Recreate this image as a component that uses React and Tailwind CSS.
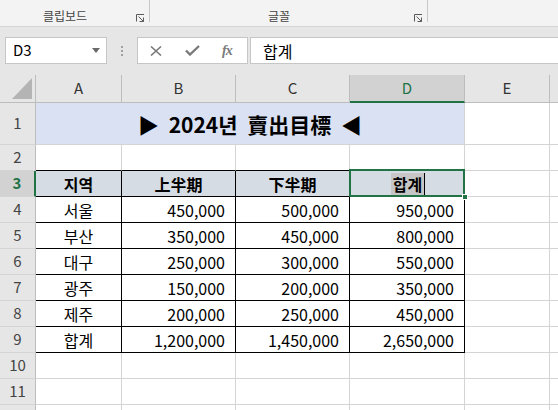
import React from 'react'

const rows = [
  ['4', '서울', '450,000', '500,000', '950,000'],
  ['5', '부산', '350,000', '450,000', '800,000'],
  ['6', '대구', '250,000', '300,000', '550,000'],
  ['7', '광주', '150,000', '200,000', '350,000'],
  ['8', '제주', '200,000', '250,000', '450,000'],
  ['9', '합계', '1,200,000', '1,450,000', '2,650,000'],
]

function Launcher() {
  return (
    <svg width="9" height="8" viewBox="0 0 9 8" className="text-[#5a5a5a]">
      <path d="M0.5 7.5V0.5H8" fill="none" stroke="currentColor" strokeWidth="1" />
      <path d="M2.5 2.5L7.5 7.5M7.5 3.5v4H3.5" fill="none" stroke="currentColor" strokeWidth="1" />
    </svg>
  )
}

function RowHead({ n, active, h = 'h-[26px]' }) {
  return (
    <div className={`w-[36px] shrink-0 ${h} flex items-center justify-center text-[15px] ${active ? 'bg-[#d2d2d2] text-[#217346] border-r-2 border-r-[#217346]' : 'bg-[#e6e6e6] text-[#444] border-r border-r-[#bdbdbd]'} border-b border-b-[#d4d4d4]`}>
      {n}
    </div>
  )
}

export default function App() {
  return (
    <div className="w-[558px] h-[410px] overflow-hidden bg-white font-['Noto_Sans_CJK_KR','Noto_Sans',sans-serif] text-black">
      {/* 리본 하단 */}
      <div className="h-[27px] bg-[#f3f3f3] border-b border-[#d4d4d4] flex text-[12px] text-[#444]">
        <div className="w-[150px] shrink-0 flex items-end border-r border-[#c8c8c8] mb-[4px]">
          <span className="ml-[43px] leading-none">클립보드</span>
          <span className="ml-auto mr-[4px]"><Launcher /></span>
        </div>
        <div className="w-[278px] shrink-0 flex items-end border-r border-[#c8c8c8] mb-[4px]">
          <span className="ml-[118px] leading-none">글꼴</span>
          <span className="ml-auto mr-[4px]"><Launcher /></span>
        </div>
      </div>

      {/* 수식 입력줄 */}
      <div className="h-[48px] bg-[#e6e6e6] flex items-start pt-[10px]">
        <div className="ml-[5px] w-[102px] h-[27px] bg-white border border-[#c6c6c6] flex items-center pl-[7px] pr-[6px] text-[15px]">
          <span>D3</span>
          <span className="ml-auto w-0 h-0 border-l-[4px] border-r-[4px] border-t-[5px] border-l-transparent border-r-transparent border-t-[#6a6a6a]" />
        </div>
        <div className="w-[30px] h-[27px] flex flex-col items-center justify-center gap-[2px]">
          <span className="w-[2px] h-[2px] bg-[#a0a0a0]" />
          <span className="w-[2px] h-[2px] bg-[#a0a0a0]" />
          <span className="w-[2px] h-[2px] bg-[#a0a0a0]" />
        </div>
        <div className="w-[111px] h-[27px] bg-white border border-[#c6c6c6] flex items-center text-[#7a7a7a]">
          <svg width="12" height="10" viewBox="0 0 12 10" className="ml-[12px]">
            <path d="M1 0.5L11 9.5M11 0.5L1 9.5" stroke="currentColor" strokeWidth="1.6" />
          </svg>
          <svg width="15" height="11" viewBox="0 0 15 11" className="ml-[23px]">
            <path d="M1 5.5L5 9.5L14 1" fill="none" stroke="currentColor" strokeWidth="2.4" />
          </svg>
          <span className="ml-[22px] text-[14px] italic font-['Liberation_Serif',serif] font-bold tracking-[-1px]">fx</span>
        </div>
        <div className="ml-[2px] flex-1 h-[27px] bg-white border border-[#c6c6c6] border-r-0 flex items-center pl-[12px] text-[16px]">
          합계
        </div>
      </div>

      {/* 열 머리글 */}
      <div className="h-[28px] flex bg-[#e6e6e6] text-[15px] text-[#333]">
        <div className="w-[36px] shrink-0 border-r border-b border-[#bdbdbd] flex items-end justify-end pr-[3px] pb-[3px]">
          <svg width="20" height="21" viewBox="0 0 20 21"><polygon points="20,0 20,21 0,21" fill="#b4b4b4" /></svg>
        </div>
        <div className="w-[86px] shrink-0 border-r border-b border-[#bdbdbd] flex items-center justify-center">A</div>
        <div className="w-[114px] shrink-0 border-r border-b border-[#bdbdbd] flex items-center justify-center">B</div>
        <div className="w-[114px] shrink-0 border-r border-b border-[#bdbdbd] flex items-center justify-center">C</div>
        <div className="w-[115px] shrink-0 border-r border-[#bdbdbd] border-b-2 border-b-[#217346] bg-[#d2d2d2] text-[#217346] flex items-center justify-center">D</div>
        <div className="w-[85px] shrink-0 border-r border-b border-[#bdbdbd] flex items-center justify-center">E</div>
        <div className="flex-1 border-b border-[#bdbdbd]" />
      </div>

      {/* 1행 제목 */}
      <div className="flex">
        <RowHead n="1" h="h-[42px]" />
        <div className="w-[429px] shrink-0 h-[42px] bg-[#d9e1f2] border-r border-b border-[#d4d4d4] flex items-center justify-center pt-[3px] text-[21px] font-bold [word-spacing:5px]">
          ▶ 2024년 賣出目標 ◀
        </div>
        <div className="w-[85px] shrink-0 h-[42px] border-r border-b border-[#d4d4d4]" />
        <div className="flex-1 h-[42px] border-b border-[#d4d4d4]" />
      </div>

      {/* 2행 */}
      <div className="flex">
        <RowHead n="2" />
        <div className="w-[86px] shrink-0 h-[26px] border-r border-r-[#d4d4d4] border-b border-b-black" />
        <div className="w-[114px] shrink-0 h-[26px] border-r border-r-[#d4d4d4] border-b border-b-black" />
        <div className="w-[114px] shrink-0 h-[26px] border-r border-r-[#d4d4d4] border-b border-b-black" />
        <div className="w-[115px] shrink-0 h-[26px] border-r border-r-[#d4d4d4] border-b border-b-black" />
        <div className="w-[85px] shrink-0 h-[26px] border-r border-b border-[#d4d4d4]" />
        <div className="flex-1 h-[26px] border-b border-[#d4d4d4]" />
      </div>

      {/* 3행 머리글 */}
      <div className="flex text-[16px] font-bold">
        <RowHead n="3" active />
        <div className="w-[86px] shrink-0 h-[26px] bg-[#d6dce4] border-r border-b border-black flex items-center justify-center">지역</div>
        <div className="w-[114px] shrink-0 h-[26px] bg-[#d6dce4] border-r border-b border-black flex items-center justify-center">上半期</div>
        <div className="w-[114px] shrink-0 h-[26px] bg-[#d6dce4] border-r border-b border-black flex items-center justify-center">下半期</div>
        <div className="relative w-[115px] shrink-0 h-[26px] bg-[#d6dce4] border-r border-b border-black flex items-center justify-center">
          <span className="bg-[#c6c6c6] px-[2px] leading-[22px] ml-[2px]">합계</span>
          <span className="w-px h-[22px] bg-black" />
          <div className="absolute -left-px -top-[2px] -right-px -bottom-px border-2 border-[#217346]" />
          <div className="absolute -right-[4px] -bottom-[4px] w-[6px] h-[6px] bg-[#217346] border border-white" />
        </div>
        <div className="w-[85px] shrink-0 h-[26px] border-r border-b border-[#d4d4d4]" />
        <div className="flex-1 h-[26px] border-b border-[#d4d4d4]" />
      </div>

      {/* 데이터 */}
      {rows.map(r => (
        <div key={r[0]} className="flex text-[16px]">
          <RowHead n={r[0]} />
          <div className="w-[86px] shrink-0 h-[26px] border-r border-b border-black flex items-center justify-center">{r[1]}</div>
          <div className="w-[114px] shrink-0 h-[26px] border-r border-b border-black flex items-center justify-end pr-[10px]">{r[2]}</div>
          <div className="w-[114px] shrink-0 h-[26px] border-r border-b border-black flex items-center justify-end pr-[10px]">{r[3]}</div>
          <div className="w-[115px] shrink-0 h-[26px] border-r border-b border-black flex items-center justify-end pr-[10px]">{r[4]}</div>
          <div className="w-[85px] shrink-0 h-[26px] border-r border-b border-[#d4d4d4]" />
          <div className="flex-1 h-[26px] border-b border-[#d4d4d4]" />
        </div>
      ))}

      {['10', '11', ''].map((n, i) => (
        <div key={i} className="flex">
          <RowHead n={n} />
          <div className="w-[86px] shrink-0 h-[26px] border-r border-b border-[#d4d4d4]" />
          <div className="w-[114px] shrink-0 h-[26px] border-r border-b border-[#d4d4d4]" />
          <div className="w-[114px] shrink-0 h-[26px] border-r border-b border-[#d4d4d4]" />
          <div className="w-[115px] shrink-0 h-[26px] border-r border-b border-[#d4d4d4]" />
          <div className="w-[85px] shrink-0 h-[26px] border-r border-b border-[#d4d4d4]" />
          <div className="flex-1 h-[26px] border-b border-[#d4d4d4]" />
        </div>
      ))}
    </div>
  )
}
